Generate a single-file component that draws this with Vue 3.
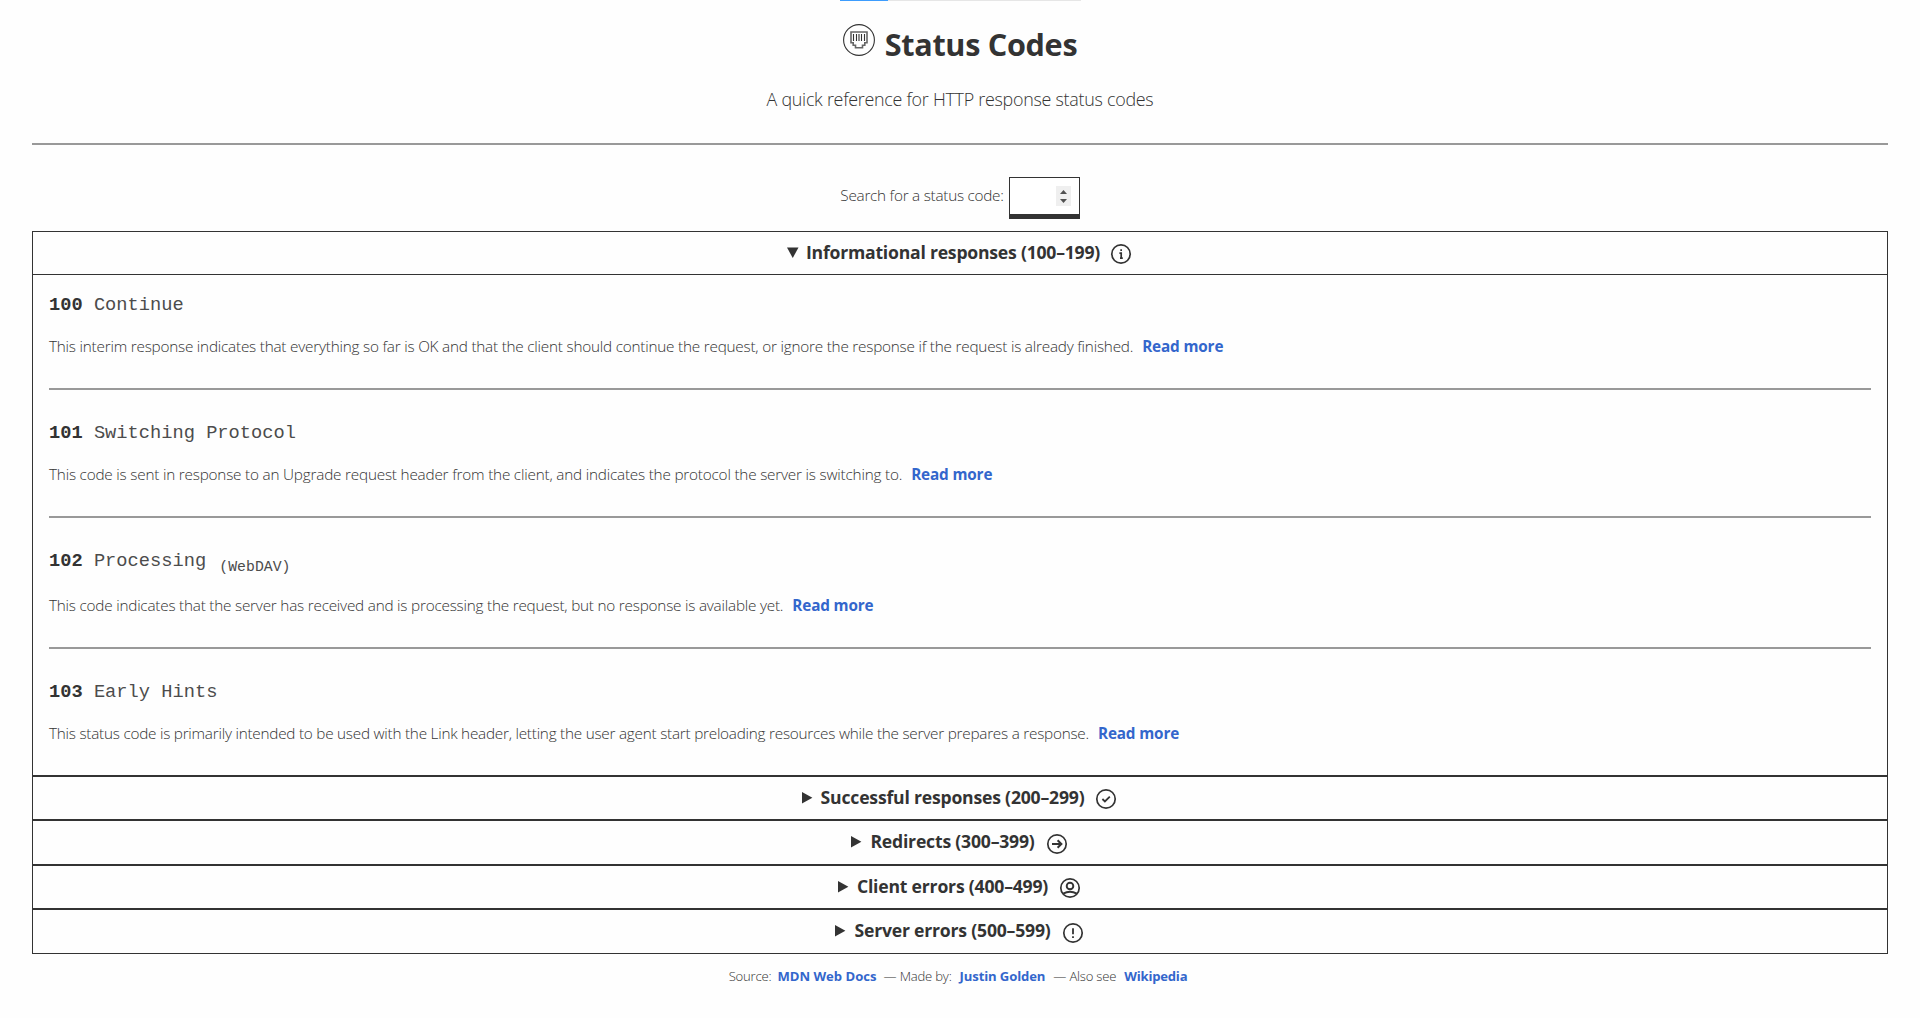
<script setup>
import { ref } from 'vue'

const query = ref('')

const codes = [
  { code: 100, name: 'Continue', text: 'This interim response indicates that everything so far is OK and that the client should continue the request, or ignore the response if the request is already finished.' },
  { code: 101, name: 'Switching Protocol', text: 'This code is sent in response to an Upgrade request header from the client, and indicates the protocol the server is switching to.' },
  { code: 102, name: 'Processing', tag: '(WebDAV)', text: 'This code indicates that the server has received and is processing the request, but no response is available yet.' },
  { code: 103, name: 'Early Hints', text: 'This status code is primarily intended to be used with the Link header, letting the user agent start preloading resources while the server prepares a response.' },
]

const groups = [
  { title: 'Informational responses (100–199)', icon: 'info', open: true },
  { title: 'Successful responses (200–299)', icon: 'check' },
  { title: 'Redirects (300–399)', icon: 'arrow' },
  { title: 'Client errors (400–499)', icon: 'user' },
  { title: 'Server errors (500–599)', icon: 'alert' },
]
</script>

<template>
  <div class="page">
    <div class="progress"><div class="progress-bar"></div></div>

    <header>
      <div class="title-row">
        <svg class="logo" viewBox="0 0 32 32" fill="none" stroke="#333">
          <circle cx="16" cy="16" r="15.4" stroke-width="1.1" />
          <path d="M8 8H24V18.8H21.8V21.3H19.5V23.8H12.5V21.3H10.2V18.8H8Z" stroke="#666" stroke-width="1.6" />
          <path d="M10.5 10V17M13.5 10V17M16 10V17M18.5 10V17M21.5 10V17" stroke="#333" stroke-width="1.1" />
        </svg>
        <h1>Status Codes</h1>
      </div>
      <p class="subtitle">A quick reference for HTTP response status codes</p>
    </header>

    <main>
      <div class="search">
        <label for="code">Search for a status code:</label>
        <div class="field">
          <input id="code" v-model="query" type="text" inputmode="numeric" />
          <svg class="spinner" viewBox="0 0 15 20">
            <path d="M4 8L7.5 4L11 8ZM4 13H11L7.5 17Z" fill="#505050" />
          </svg>
        </div>
      </div>

      <section v-for="g in groups" :key="g.title" class="group" :class="{ open: g.open }">
        <div class="summary">
          <svg v-if="g.open" class="marker" viewBox="0 0 18 14"><path d="M0 1.5H11.5L5.75 12Z" fill="#333" /></svg>
          <svg v-else class="marker" viewBox="0 0 18 14"><path d="M0 1V12.4L10.4 6.7Z" fill="#333" /></svg>
          <h2>{{ g.title }}</h2>
          <svg class="icon" viewBox="0 0 24 24" fill="none" stroke="#333" stroke-width="1.7">
            <circle cx="12" cy="12" r="9.2" />
            <path v-if="g.icon === 'info'" d="M10.4 11.2H12.2V16M11 16.2H13.8M11.3 8.1H13" stroke-width="1.7" />
            <path v-else-if="g.icon === 'check'" d="M8.4 12L10.9 14.4L15.8 9.6" stroke-width="1.8" />
            <path v-else-if="g.icon === 'arrow'" d="M7 12H16.4M12.6 8.2L16.4 12L12.6 15.8" stroke-width="2" />
            <g v-else-if="g.icon === 'user'">
              <circle cx="12" cy="10" r="3.3" stroke-width="1.9" />
              <path d="M5.2 17.6Q12 13.8 18.8 17.6" stroke-width="1.9" />
            </g>
            <path v-else d="M12 7.2V13.2M12 15.2V17" stroke-width="1.8" />
          </svg>
        </div>
        <div v-if="g.open" class="list">
          <article v-for="c in codes" :key="c.code">
            <h3><b>{{ c.code }}</b> {{ c.name }} <span v-if="c.tag" class="tag">{{ c.tag }}</span></h3>
            <p :class="{ lower: c.tag }"><span>{{ c.text }}</span><a>Read more</a></p>
          </article>
        </div>
      </section>
    </main>

    <footer>
      <span class="src">Source:</span><a class="mdn">MDN Web Docs</a>
      <span class="by">— Made by:</span><a class="author">Justin Golden</a>
      <span class="also">— Also see</span><a class="wiki">Wikipedia</a>
    </footer>
  </div>
</template>

<style>
body {
  margin: 0;
  background: #fefefe;
}
</style>

<style scoped>
.page {
  box-sizing: border-box;
  height: 1018px;
  padding: 0 32px;
  overflow: hidden;
  color: #333;
  font-family: "Open Sans", "Noto Sans", sans-serif;
  font-size: 15.3px;
  font-weight: 300;
  letter-spacing: -0.21px;
  white-space: nowrap;
}
h1, h2, h3, p {
  margin: 0;
}
a {
  color: #36c;
  font-weight: 700;
}
.progress {
  width: 241px;
  height: 1px;
  margin: 0 auto;
  background: #e6e6e6;
}
.progress-bar {
  width: 48px;
  height: 1px;
  background: #3d9cfd;
}
header {
  height: 142px;
  border-bottom: 2px solid #999;
}
.title-row {
  display: flex;
  justify-content: center;
  padding-top: 21px;
}
.logo {
  width: 32px;
  height: 32px;
  margin: 2px 10px 0 0;
}
h1 {
  margin-top: 1px;
  font-size: 30.6px;
  line-height: 42px;
  letter-spacing: -0.3px;
}
.subtitle {
  margin-top: 22px;
  font-size: 17.9px;
  line-height: 24px;
  letter-spacing: -0.27px;
  text-align: center;
}
.search {
  display: flex;
  justify-content: center;
  padding: 32px 0 12px;
}
label {
  margin: 6px 5px 0 0;
  line-height: 24px;
  letter-spacing: -0.25px;
}
.field {
  display: flex;
  align-items: center;
  box-sizing: border-box;
  width: 71px;
  height: 42px;
  padding: 0 8px;
  border: 1px solid #333;
  border-bottom-width: 5px;
  background: #fff;
}
input {
  flex: 1;
  min-width: 0;
  padding: 0;
  border: 0;
  outline: 0;
  background: none;
  font: inherit;
}
.spinner {
  width: 15px;
  height: 20px;
  background: #efefef;
}
.group {
  box-sizing: border-box;
  height: 44px;
  border: 1px solid #333;
}
.group:nth-of-type(odd) {
  height: 45px;
}
.group.open {
  height: 545px;
}
.summary {
  display: flex;
  justify-content: center;
  height: 42px;
}
.open .summary {
  border-bottom: 1px solid #333;
}
.marker {
  width: 18px;
  height: 14px;
  margin: 14px 1px 0 0;
}
h2 {
  margin: 8px 10px 0 0;
  font-size: 17.6px;
  line-height: 24px;
  letter-spacing: -0.2px;
}
.open h2 {
  margin-right: 9px;
  letter-spacing: -0.22px;
}
.icon {
  width: 24px;
  height: 24px;
  margin-top: 10px;
}
.group:nth-of-type(odd):not(.open) .icon {
  margin-top: 11px;
}
article {
  margin: 0 16px;
  padding: 31px 0 30px;
}
article:first-child {
  padding-top: 18px;
}
article + article {
  border-top: 2px solid #999;
}
h3 {
  height: 24px;
  color: #4c4c4c;
  font: 400 18.72px/24px "Liberation Mono", monospace;
  letter-spacing: 0;
}
h3 b {
  color: #333;
}
.tag {
  position: relative;
  top: 5px;
  margin-left: 2px;
  font-size: 14.8px;
}
article p {
  margin-top: 17px;
  line-height: 24px;
  letter-spacing: -0.215px;
}
article:nth-child(2) p {
  letter-spacing: -0.2px;
}
article:last-child p {
  letter-spacing: -0.235px;
}
article p.lower {
  margin-top: 20px;
}
article a {
  margin-left: 9px;
  letter-spacing: -0.15px;
}
footer {
  display: flex;
  justify-content: center;
  padding: 11px 4px 0 0;
  font-size: 13.1px;
  line-height: 22px;
}
footer .by, footer .also {
  margin-right: 8px;
}
footer .src {
  margin-right: 6px;
}
.mdn, .author {
  margin-right: 7px;
  letter-spacing: 0;
}
.author {
  margin-right: 8px;
  letter-spacing: -0.12px;
}
</style>
